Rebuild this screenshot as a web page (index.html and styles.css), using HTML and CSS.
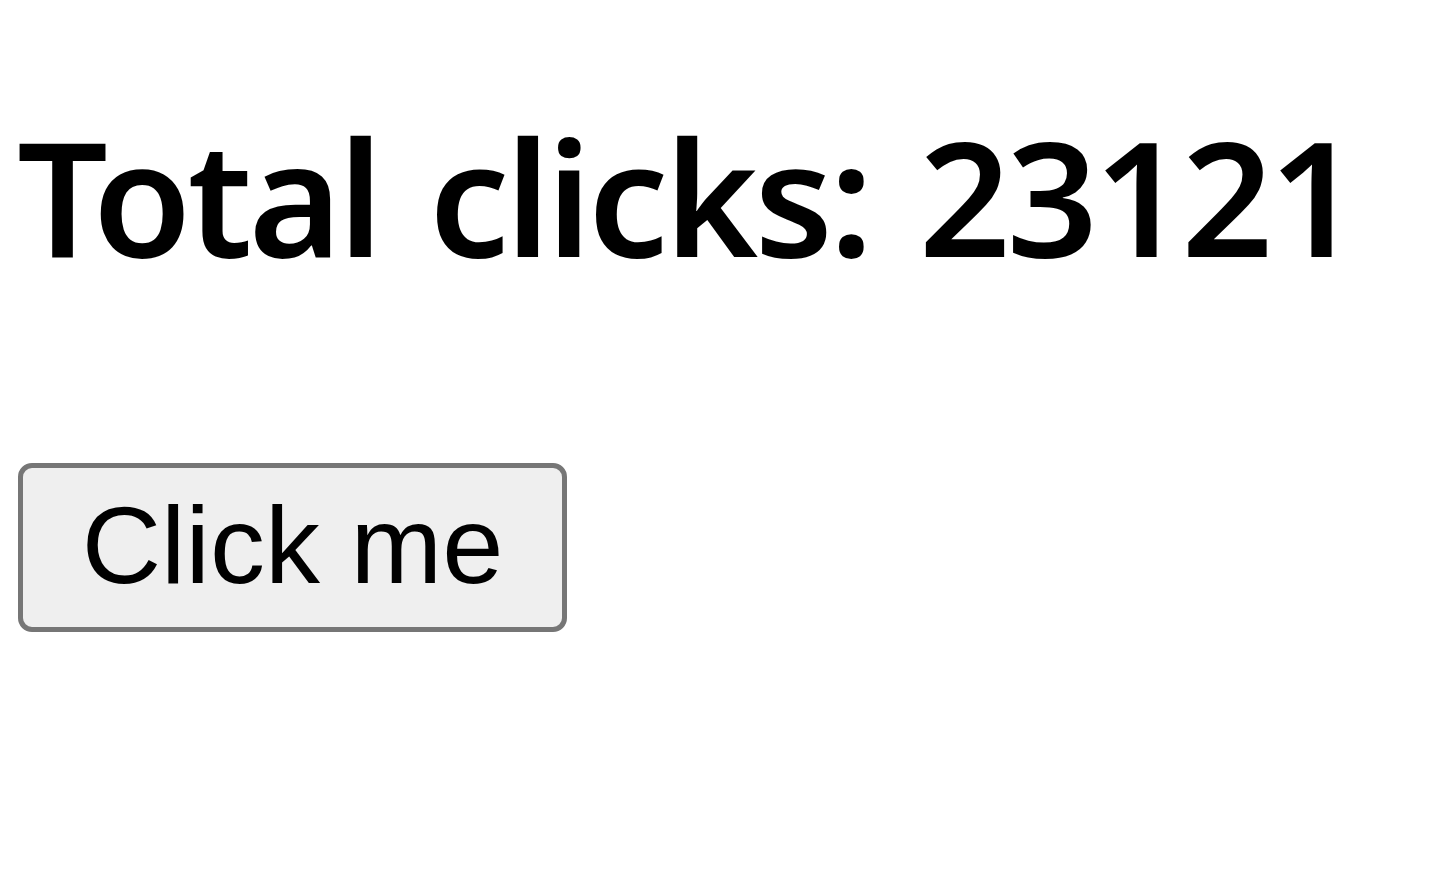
FILE: index.html
```html
<!DOCTYPE html>
<html>
<head>
<meta charset="utf-8">
<link rel="stylesheet" href="styles.css">
</head>
<body>
<main class="page">
  <h1 class="total">Total clicks: 23121</h1>
  <button class="btn">Click me</button>
</main>
</body>
</html>
```
FILE: styles.css
```css
html, body {
  margin: 0;
  padding: 0;
  background: #ffffff;
}
.page {
  display: flex;
  flex-direction: column;
  align-items: flex-start;
  padding: 115px 0 0 17px;
}
.total {
  margin: 0;
  font-family: "Noto Sans", "Open Sans", sans-serif;
  font-weight: 600;
  font-size: 160px;
  line-height: 160px;
  letter-spacing: -4px;
  word-spacing: 12px;
  color: #000;
  white-space: nowrap;
}
.btn {
  margin: 188px 0 0 1px;
  width: 549px;
  height: 169px;
  box-sizing: border-box;
  border: 5px solid #767676;
  border-radius: 14px;
  background: #efefef;
  color: #000;
  font-family: "Liberation Sans", Arial, sans-serif;
  font-size: 110px;
  padding: 0 0 6px 0;
  display: inline-flex;
  align-items: center;
  justify-content: center;
}
```
